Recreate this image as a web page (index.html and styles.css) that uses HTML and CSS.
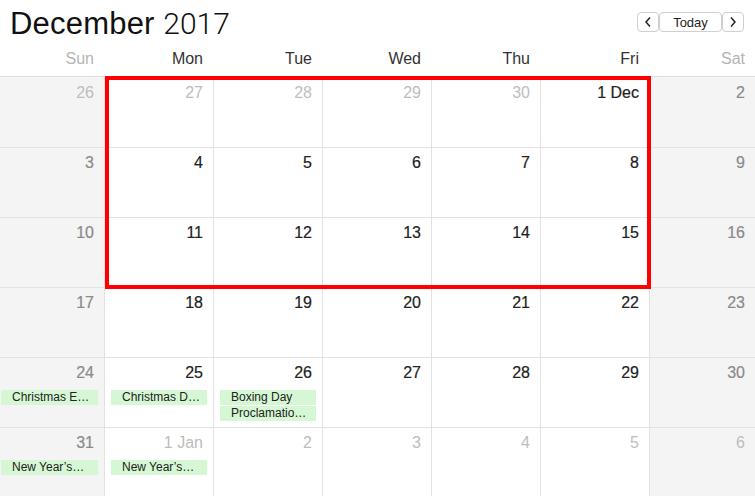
FILE: index.html
```html
<!DOCTYPE html>
<html>
<head>
<meta charset="utf-8">
<link rel="stylesheet" href="styles.css">
</head>
<body>
<div class="cal">
  <header class="top">
    <h1 class="title"><span class="month">December</span> <span class="year">2017</span></h1>
    <div class="nav">
      <button class="btn arrow"><svg width="8" height="12" viewBox="0 0 8 12"><path d="M6 1.5 L2 6 L6 10.5" fill="none" stroke="#222" stroke-width="1.5"/></svg></button>
      <button class="btn today">Today</button>
      <button class="btn arrow"><svg width="8" height="12" viewBox="0 0 8 12"><path d="M2 1.5 L6 6 L2 10.5" fill="none" stroke="#222" stroke-width="1.5"/></svg></button>
    </div>
  </header>
  <div class="dow">
    <div class="dn we">Sun</div><div class="dn">Mon</div><div class="dn">Tue</div><div class="dn">Wed</div><div class="dn">Thu</div><div class="dn">Fri</div><div class="dn we">Sat</div>
  </div>
  <div class="grid">
    <div class="cell we"><div class="num oth">26</div></div>
    <div class="cell"><div class="num oth">27</div></div>
    <div class="cell"><div class="num oth">28</div></div>
    <div class="cell"><div class="num oth">29</div></div>
    <div class="cell"><div class="num oth">30</div></div>
    <div class="cell"><div class="num">1 Dec</div></div>
    <div class="cell we"><div class="num wk">2</div></div>

    <div class="cell we r"><div class="num wk">3</div></div>
    <div class="cell r"><div class="num">4</div></div>
    <div class="cell r"><div class="num">5</div></div>
    <div class="cell r"><div class="num">6</div></div>
    <div class="cell r"><div class="num">7</div></div>
    <div class="cell r"><div class="num">8</div></div>
    <div class="cell we r"><div class="num wk">9</div></div>

    <div class="cell we r"><div class="num wk">10</div></div>
    <div class="cell r"><div class="num">11</div></div>
    <div class="cell r"><div class="num">12</div></div>
    <div class="cell r"><div class="num">13</div></div>
    <div class="cell r"><div class="num">14</div></div>
    <div class="cell r"><div class="num">15</div></div>
    <div class="cell we r"><div class="num wk">16</div></div>

    <div class="cell we r"><div class="num wk">17</div></div>
    <div class="cell r"><div class="num">18</div></div>
    <div class="cell r"><div class="num">19</div></div>
    <div class="cell r"><div class="num">20</div></div>
    <div class="cell r"><div class="num">21</div></div>
    <div class="cell r"><div class="num">22</div></div>
    <div class="cell we r"><div class="num wk">23</div></div>

    <div class="cell we r sun"><div class="num wk">24</div><div class="ev">Christmas E…</div></div>
    <div class="cell r"><div class="num">25</div><div class="ev">Christmas D…</div></div>
    <div class="cell r"><div class="num">26</div><div class="ev">Boxing Day</div><div class="ev">Proclamatio…</div></div>
    <div class="cell r"><div class="num">27</div></div>
    <div class="cell r"><div class="num">28</div></div>
    <div class="cell r"><div class="num">29</div></div>
    <div class="cell we r"><div class="num wk">30</div></div>

    <div class="cell we r sun"><div class="num wk">31</div><div class="ev">New Year’s…</div></div>
    <div class="cell r"><div class="num oth">1 Jan</div><div class="ev">New Year’s…</div></div>
    <div class="cell r"><div class="num oth">2</div></div>
    <div class="cell r"><div class="num oth">3</div></div>
    <div class="cell r"><div class="num oth">4</div></div>
    <div class="cell r"><div class="num oth">5</div></div>
    <div class="cell we r"><div class="num oth">6</div></div>
  </div>
  <div class="selection"></div>
</div>
</body>
</html>
```
FILE: styles.css
```css
html, body {
  margin: 0;
  padding: 0;
  background: #fff;
  overflow: hidden;
}
body {
  font-family: "Liberation Sans", Arial, sans-serif;
  color: #333;
}
.cal {
  position: relative;
  width: 755px;
  height: 496px;
  overflow: hidden;
}
.top {
  height: 44px;
  display: flex;
  justify-content: space-between;
  align-items: flex-start;
  box-sizing: border-box;
  padding: 0 11px 0 10px;
}
.title {
  margin: 0;
  padding-top: 6px;
  font-size: 31px;
  line-height: 36px;
  font-weight: normal;
  color: #111;
}
.month { letter-spacing: 0.2px; }
.year {
  font-family: Roboto, "Liberation Sans", sans-serif;
  font-weight: 300;
  font-size: 30px;
}
.nav {
  display: flex;
  margin-top: 12px;
}
.btn {
  height: 20px;
  margin: 0;
  padding: 0;
  border: 1px solid #cfcfcf;
  border-radius: 4px;
  background: #fff;
  font-family: "Liberation Sans", Arial, sans-serif;
  font-size: 13px;
  color: #222;
  display: flex;
  align-items: center;
  justify-content: center;
  box-sizing: border-box;
}
.arrow { width: 22px; }
.today { width: 63px; }
.dow {
  display: grid;
  grid-template-columns: 104px repeat(5, 109px) 106px;
  height: 33px;
  box-sizing: border-box;
  border-bottom: 1px solid #dcdcdc;
}
.dn {
  text-align: right;
  padding: 6px 10px 0 0;
  font-size: 16px;
  line-height: 18px;
  color: #333;
}
.dn.we { color: #b4b4b4; }
.grid {
  display: grid;
  grid-template-columns: 104px repeat(5, 109px) 106px;
  grid-auto-rows: 70px;
}
.cell {
  box-sizing: border-box;
  border-left: 1px solid #e2e2e2;
  padding-top: 6px;
}
.cell:nth-child(7n+1) { border-left: none; }
.cell.r { border-top: 1px solid #e2e2e2; }
.cell.r .num { margin-top: -1px; }
.cell.we { background: #f4f4f4; }
.num {
  text-align: right;
  padding-right: 10px;
  font-size: 16px;
  line-height: 20px;
  color: #222;
  height: 20px;
  margin-bottom: 7px;
  -webkit-text-stroke: 0.2px currentColor;
}
.num.wk { color: #8a8a8a; }
.num.oth { color: #bdbdbd; -webkit-text-stroke: 0; }
.ev {
  height: 15px;
  margin: 0 6px 1px 6px;
  padding-left: 11px;
  background: #d5f7d3;
  font-size: 12px;
  line-height: 15px;
  color: #222;
  white-space: nowrap;
  overflow: hidden;
}
.sun .ev { margin-left: 1px; }
.selection {
  position: absolute;
  left: 105px;
  top: 76px;
  width: 546px;
  height: 213px;
  box-sizing: border-box;
  border: 4px solid #ff0000;
  pointer-events: none;
}
```
